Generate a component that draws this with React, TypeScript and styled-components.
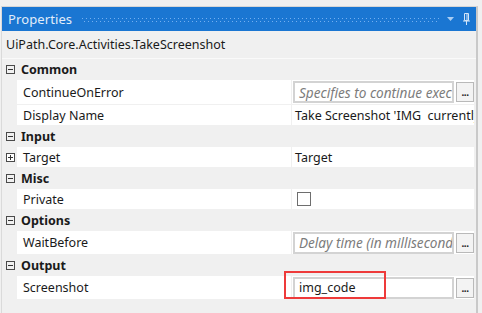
import React from "react";
import styled, { createGlobalStyle } from "styled-components";

const Global = createGlobalStyle`
  html, body { margin: 0; padding: 0; background: #f0f0f0; }
  body { font-family: "Noto Sans", "Noto Sans CJK SC", sans-serif; font-size: 12px; color: #1a1a1a; }
  * { box-sizing: border-box; }
`;

const Page = styled.div`
  width: 482px;
  height: 313px;
  padding: 6px 0 0 1px;
  overflow: hidden;
`;

const Panel = styled.div`
  width: 477px;
  height: 307px;
  border-top: 1px solid #d6d6d6;
  border-left: 1px solid #dadada;
  border-right: 2px solid #c9c9c9;
  display: flex;
  flex-direction: column;
`;

const TitleBar = styled.div`
  height: 24px;
  background: #1a76d2;
  display: flex;
  align-items: center;
  padding: 0 0 0 6px;
`;

const Title = styled.span`
  color: #e2edf9;
  font-size: 13px;
  letter-spacing: 0.1px;
`;

const Grip = styled.div`
  flex: 1;
  height: 4px;
  margin: 2px 8px 0 10px;
  background-image:
    radial-gradient(circle at 0.5px 0.5px, #74aff0 0.7px, transparent 0.8px),
    radial-gradient(circle at 2.5px 3.5px, #74aff0 0.7px, transparent 0.8px);
  background-size: 4px 4px;
`;

const TitleButtons = styled.div`
  display: flex;
  align-items: center;
  gap: 9px;
  padding-right: 6px;
`;

const TypeRow = styled.div`
  height: 28px;
  display: flex;
  align-items: center;
  padding-left: 4px;
  border-bottom: 1px solid #fafafa;
  font-size: 12.5px;
`;

const Grid = styled.div`
  display: flex;
  flex-direction: column;
  padding-right: 2px;
`;

const CategoryRow = styled.div`
  height: 21px;
  display: flex;
  align-items: center;
  padding-left: 4px;
  gap: 6px;
  font-weight: 700;
  font-size: 12.5px;
`;

const Box = styled.span<{ $light?: boolean }>`
  width: 9px;
  height: 9px;
  border: 1px solid #4a4a4a;
  background: ${(p) => (p.$light ? "#ffffff" : "transparent")};
  position: relative;
  flex: none;
  &::before {
    content: "";
    position: absolute;
    left: 1px;
    right: 1px;
    top: 3px;
    height: 1px;
    background: #333;
  }
`;

const PlusBox = styled(Box)`
  &::after {
    content: "";
    position: absolute;
    top: 1px;
    bottom: 1px;
    left: 3px;
    width: 1px;
    background: #333;
  }
`;

const PropRow = styled.div<{ $h: number }>`
  height: ${(p) => p.$h}px;
  display: flex;
`;

const Indent = styled.div`
  width: 15px;
  flex: none;
  display: flex;
  align-items: center;
  padding-left: 4px;
`;

const NameCell = styled.div`
  width: 275px;
  flex: none;
  background: #fff;
  border-right: 1px solid #f0f0f0;
  border-bottom: 1px solid #f0f0f0;
  display: flex;
  align-items: center;
  padding-left: 6px;
  font-size: 12.5px;
`;

const ValueCell = styled.div`
  flex: 1;
  min-width: 0;
  background: #fff;
  border-bottom: 1px solid #f0f0f0;
  display: flex;
  align-items: center;
  padding-left: 3px;
  white-space: pre;
  overflow: hidden;
  font-size: 12.5px;
  position: relative;
`;

const EditorCell = styled(ValueCell)`
  padding: 0 0 0 1px;
  gap: 2px;
  overflow: visible;
`;

const TextBox = styled.div<{ $placeholder?: boolean }>`
  width: 161px;
  height: 22px;
  border: 2px solid #d3d3d3;
  background: #fff;
  display: flex;
  align-items: center;
  padding-left: 4px;
  white-space: nowrap;
  overflow: hidden;
  font-size: ${(p) => (p.$placeholder ? 13.6 : 12.5)}px;
  font-style: ${(p) => (p.$placeholder ? "italic" : "normal")};
  color: ${(p) => (p.$placeholder ? "#7c7c7c" : "#1a1a1a")};
`;

const DotsButton = styled.div`
  width: 18px;
  height: 20px;
  border: 1px solid #b9b9b9;
  background: #f3f3f3;
  display: flex;
  align-items: flex-end;
  justify-content: center;
  padding-bottom: 4px;
  font-size: 10px;
  font-weight: 700;
  line-height: 1;
  letter-spacing: -0.5px;
  color: #222;
`;

const Highlight = styled.div`
  position: absolute;
  left: -8px;
  top: -5px;
  width: 102px;
  height: 28px;
  border: 2px solid #ee3a3a;
  pointer-events: none;
`;

const Check = styled.span`
  width: 14px;
  height: 14px;
  border: 1px solid #6e6e6e;
  background: #fff;
  margin-left: 2px;
`;

const Filler = styled.div`
  flex: 1;
`;

type Prop = {
  name: string;
  h: number;
  value?: React.ReactNode;
  editor?: { text: string; placeholder?: boolean; highlight?: boolean };
  expandable?: boolean;
};

type Category = { title: string; props: Prop[] };

const data: Category[] = [
  {
    title: "Common",
    props: [
      { name: "ContinueOnError", h: 25, editor: { text: "Specifies to continue executing the remaining activities", placeholder: true } },
      { name: "Display Name", h: 21, value: "Take Screenshot 'IMG  currentlyActiveWindow'" },
    ],
  },
  { title: "Input", props: [{ name: "Target", h: 21, value: "Target", expandable: true }] },
  { title: "Misc", props: [{ name: "Private", h: 21, value: <Check /> }] },
  {
    title: "Options",
    props: [{ name: "WaitBefore", h: 24, editor: { text: "Delay time (in milliseconds) before", placeholder: true } }],
  },
  { title: "Output", props: [{ name: "Screenshot", h: 24, editor: { text: "img_code", highlight: true } }] },
];

export default function App() {
  return (
    <Page>
      <Global />
      <Panel>
        <TitleBar>
          <Title>Properties</Title>
          <Grip />
          <TitleButtons>
            <svg width="7" height="4" viewBox="0 0 7 4">
              <path d="M0 0H7L3.5 4Z" fill="#a9cdf3" />
            </svg>
            <svg width="7" height="12" viewBox="0 0 7 12">
              <path d="M1.5 0.5H5.5V7.5H1.5Z" fill="none" stroke="#d3e5f8" />
              <path d="M4 1V7" stroke="#d3e5f8" />
              <path d="M0 8H7" stroke="#d3e5f8" />
              <path d="M3.5 8V12" stroke="#d3e5f8" />
            </svg>
          </TitleButtons>
        </TitleBar>
        <TypeRow>UiPath.Core.Activities.TakeScreenshot</TypeRow>
        <Grid>
          {data.map((cat) => (
            <React.Fragment key={cat.title}>
              <CategoryRow>
                <Box />
                {cat.title}
              </CategoryRow>
              {cat.props.map((p) => (
                <PropRow key={p.name} $h={p.h}>
                  <Indent>{p.expandable && <PlusBox $light />}</Indent>
                  <NameCell>{p.name}</NameCell>
                  {p.editor ? (
                    <EditorCell>
                      <TextBox $placeholder={p.editor.placeholder}>{p.editor.text}</TextBox>
                      <DotsButton>...</DotsButton>
                      {p.editor.highlight && <Highlight />}
                    </EditorCell>
                  ) : (
                    <ValueCell>{p.value}</ValueCell>
                  )}
                </PropRow>
              ))}
            </React.Fragment>
          ))}
        </Grid>
        <Filler />
      </Panel>
    </Page>
  );
}
